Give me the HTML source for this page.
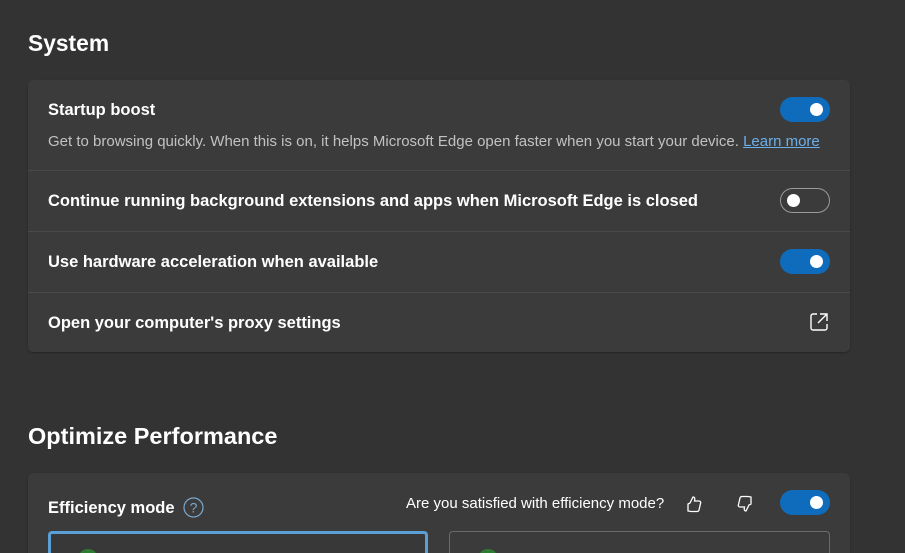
<!DOCTYPE html>
<html style="overflow:hidden;height:553px"><head><style>
body{margin:0;width:905px;height:553px;overflow:hidden;background:#333333;font-family:"Segoe UI","Liberation Sans",sans-serif;color:#fff;position:relative}
.abs{position:absolute}
h2{position:absolute;margin:0;font-weight:600;font-size:23.5px;left:28px}
.card{position:absolute;left:28px;width:822px;background:#3b3b3b;border-radius:5px;box-shadow:0 1px 2px rgba(0,0,0,.3)}
.row{position:absolute;left:0;right:0;border-top:1px solid #4a4a4a}
.t{position:absolute;left:20px;font-size:16.5px;font-weight:600;color:#fff}
.tg{position:absolute;left:752px;width:50px;height:25px;border-radius:13px;background:#0f6cbd}
.tg:after{content:"";position:absolute;right:7px;top:6px;width:13px;height:13px;border-radius:50%;background:#fff}
.tg.off{background:transparent;border:1px solid #9a9a9a;width:48px;height:23px}
.tg.off:after{left:6px;right:auto;top:5px}
</style></head><body>
<h2 style="top:30px;font-size:22.8px">System</h2>
<div class="card" style="top:80px;height:272px">
 <div class="t" style="top:21px">Startup boost</div>
 <div class="tg" style="top:17px"></div>
 <div class="abs" style="left:20px;top:53px;font-size:15px;color:#c2c2c2">Get to browsing quickly. When this is on, it helps Microsoft Edge open faster when you start your device. <span style="color:#6cb0ea;text-decoration:underline">Learn more</span></div>
 <div class="row" style="top:90px;height:60px"><div class="t" style="top:21px">Continue running background extensions and apps when Microsoft Edge is closed</div><div class="tg off" style="top:17px"></div></div>
 <div class="row" style="top:151px;height:60px"><div class="t" style="top:21px">Use hardware acceleration when available</div><div class="tg" style="top:17px"></div></div>
 <div class="row" style="top:212px;height:60px"><div class="t" style="top:21px">Open your computer's proxy settings</div>
 <svg class="abs" style="left:781px;top:19px" width="20" height="20" viewBox="0 0 20 20" fill="none" stroke="#fff" stroke-width="1.4"><path d="M8 2H4a2 2 0 0 0-2 2v12a2 2 0 0 0 2 2h12a2 2 0 0 0 2-2v-4"/><path d="M11 2h7v7M18 2l-9 9"/></svg></div>
</div>
<h2 style="top:423px">Optimize Performance</h2>
<div class="card" style="top:473px;height:100px">
 <div class="t" style="top:26px">Efficiency mode</div>
 <svg class="abs" style="left:155px;top:24px" width="21" height="21" viewBox="0 0 21 21"><circle cx="10.5" cy="10.5" r="9.5" fill="none" stroke="#7aa8cf" stroke-width="1.2"/><text x="10.5" y="15.5" font-size="14" fill="#7aa8cf" text-anchor="middle" font-family="Liberation Sans">?</text></svg>
 <div class="abs" style="left:378px;top:22px;font-size:15px;color:#fff">Are you satisfied with efficiency mode?</div>
 <svg class="abs" style="left:656px;top:21px" width="20" height="20" viewBox="0 0 20 20" fill="none" stroke="#fff" stroke-width="1.3"><path d="M6 9l3-6c2 0 2 2 1.5 4H15c1.5 0 2 1.5 1.5 2.5L15 16c-.3 1-1 1.5-2 1.5H7L4 17V10z"/></svg>
 <svg class="abs" style="left:707px;top:21px" width="20" height="20" viewBox="0 0 20 20" fill="none" stroke="#fff" stroke-width="1.3"><path d="M14 11l-3 6c-2 0-2-2-1.5-4H5c-1.5 0-2-1.5-1.5-2.5L5 4c.3-1 1-1.5 2-1.5h6l3 .5v7z"/></svg>
 <div class="tg" style="top:17px"></div>
 <div class="abs" style="left:20px;top:58px;width:374px;height:40px;border:3px solid #5a9fd6;border-bottom:none;border-radius:4px 4px 0 0;background:#383838"></div>
 <div class="abs" style="left:421px;top:58px;width:379px;height:40px;border:1px solid #6a6a6a;border-bottom:none;border-radius:4px 4px 0 0"></div>
 <div class="abs" style="left:50px;top:76px;width:20px;height:20px;border-radius:50%;background:#2e7d32"></div>
 <div class="abs" style="left:450px;top:76px;width:20px;height:20px;border-radius:50%;background:#2e7d32"></div>
</div>
</body></html>
